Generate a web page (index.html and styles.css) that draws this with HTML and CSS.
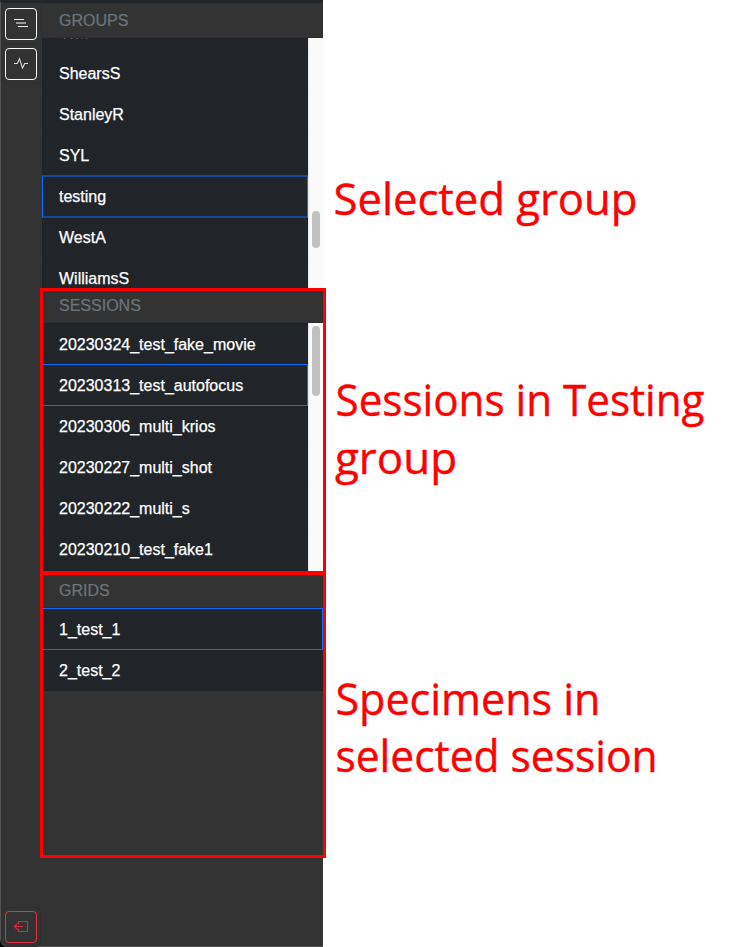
FILE: index.html
```html
<!DOCTYPE html>
<html lang="en">
<head>
<meta charset="utf-8">
<title>Sessions</title>
<link rel="stylesheet" href="styles.css">
</head>
<body>
<div class="page">
  <div class="window">
  <div class="app">
    <nav class="rail">
      <div class="tools">
        <button class="tool" aria-label="List"><svg viewBox="0 0 30 30"><path d="M8 10.500h10M12 17.500h10" stroke="#eee"/><path d="M10 14h10" stroke="#999" stroke-width="2"/></svg></button>
        <button class="tool" aria-label="Activity"><svg viewBox="0 0 30 30"><path d="M8 14.500h3.300l2.200-4.800 3 9.300 2.200-4.500H22" stroke="#ddd" stroke-width="1.100"/></svg></button>
      </div>
      <button class="tool exit" aria-label="Log out"><svg viewBox="0 0 30 30"><path d="M12.500 12V9.500h9v10h-9V17M8.500 14.500H17M11.500 11.500l-3 3 3 3" stroke="#d0303f" stroke-width="1.100"/></svg></button>
    </nav>
    <main class="panels">
      <section class="groups">
        <h2>GROUPS</h2>
        <div class="scroller">
          <ul>
            <li>Sha</li><li>ShearsS</li><li>StanleyR</li><li>SYL</li><li class="selected">testing</li><li>WestA</li><li>WilliamsS</li>
          </ul>
          <div class="track"><div class="thumb"></div></div>
        </div>
      </section>
      <section class="sessions">
        <h2>SESSIONS</h2>
        <div class="scroller">
          <ul>
            <li>20230324_test_fake_movie</li><li class="selected">20230313_test_autofocus</li><li>20230306_multi_krios</li><li>20230227_multi_shot</li><li>20230222_multi_s</li><li>20230210_test_fake1</li>
          </ul>
          <div class="track"><div class="thumb"></div></div>
        </div>
      </section>
      <section class="grids">
        <h2>GRIDS</h2>
        <ul><li class="selected">1_test_1</li><li>2_test_2</li></ul>
      </section>
    </main>
    <div class="outline outline-sessions"></div>
    <div class="outline outline-grids"></div>
  </div>
  </div>
  <aside class="notes">
    <svg viewBox="0 0 429 947">
      <text x="9.500" y="215" textLength="304" lengthAdjust="spacingAndGlyphs">Selected group</text>
      <text x="11.500" y="416" textLength="369" lengthAdjust="spacingAndGlyphs">Sessions in Testing</text>
      <text x="11" y="474" textLength="122" lengthAdjust="spacingAndGlyphs">group</text>
      <text x="11.500" y="715" textLength="265" lengthAdjust="spacingAndGlyphs">Specimens in</text>
      <text x="11.500" y="772" textLength="322" lengthAdjust="spacingAndGlyphs">selected session</text>
    </svg>
  </aside>
</div>
</body>
</html>
```

FILE: styles.css
```css
* { box-sizing: border-box; }
body { margin: 0; background: #fff; font: 16px/24px "Liberation Sans", Arial, sans-serif; }
.page { display: flex; width: 753px; height: 947px; overflow: hidden; }
.window { width: 323px; margin-right: 1px; background: #000; }
.app { position: relative; display: flex; width: 323px; height: 947px; border-top: 3px solid #212529; border-left: 1px solid #555; border-bottom: 1px solid #555; border-bottom-left-radius: 8px; background: #333; }
.rail { display: flex; flex-direction: column; justify-content: space-between; width: 41px; padding-top: 1px; }
.tools { display: flex; flex-direction: column; width: 40px; }
.tool { display: block; width: 40px; height: 40px; margin: 0; padding: 3px; border: 1px solid #2f2f2f; border-radius: 5px; background: none; }
.tool svg { display: block; width: 32px; height: 32px; border: 1px solid #f8f9fa; border-radius: 4px; fill: none; }
.exit { margin-bottom: -1px; }
.exit svg { border-color: #dc3545; }
.panels { width: 281px; }
section { height: 285px; }
h2 { height: 35px; margin: 0; padding: 5px 16px 0; border: 1px solid #2e2e2e; font-size: 16px; font-weight: 400; color: #6c757d; -webkit-text-stroke: .2px; }
.scroller { display: flex; height: 250px; overflow: hidden; background: #212529; }
ul { flex: 1; list-style: none; margin: 0; padding: 0; }
li { height: 42px; margin-bottom: -1px; padding: 9px 16px 7px; border: 1px solid #1f2327; background: #212529; color: #fff; white-space: nowrap; -webkit-text-stroke: .25px; }
li.selected { position: relative; border-color: #0d6efd; }
.groups ul { margin-top: -26px; }
.groups li { padding-top: 8px; }
.groups .selected { border-top-color: #17479a; border-bottom-color: #17479a; box-shadow: inset 0 -1px #17479a, 0 -1px #17479a; }
.track { width: 15px; border-left: 1px solid #e8e8e8; background: #fafafa; }
.thumb { width: 8px; margin: 3px auto 0; border-radius: 4px; background: #c1c1c1; height: 70px; }
.groups .thumb { height: 37px; margin-top: 173px; }
.outline { position: absolute; left: 39px; border: 3px solid #f00; }
.outline-sessions { top: 285px; width: 286px; height: 286px; }
.outline-grids { top: 569px; width: 286px; height: 286px; }
.notes { width: 429px; }
.notes svg { display: block; width: 429px; height: 947px; }
.notes text { font: 44px "Open Sans", "Noto Sans", sans-serif; fill: #f00; stroke: #f00; stroke-width: .4px; }
```
